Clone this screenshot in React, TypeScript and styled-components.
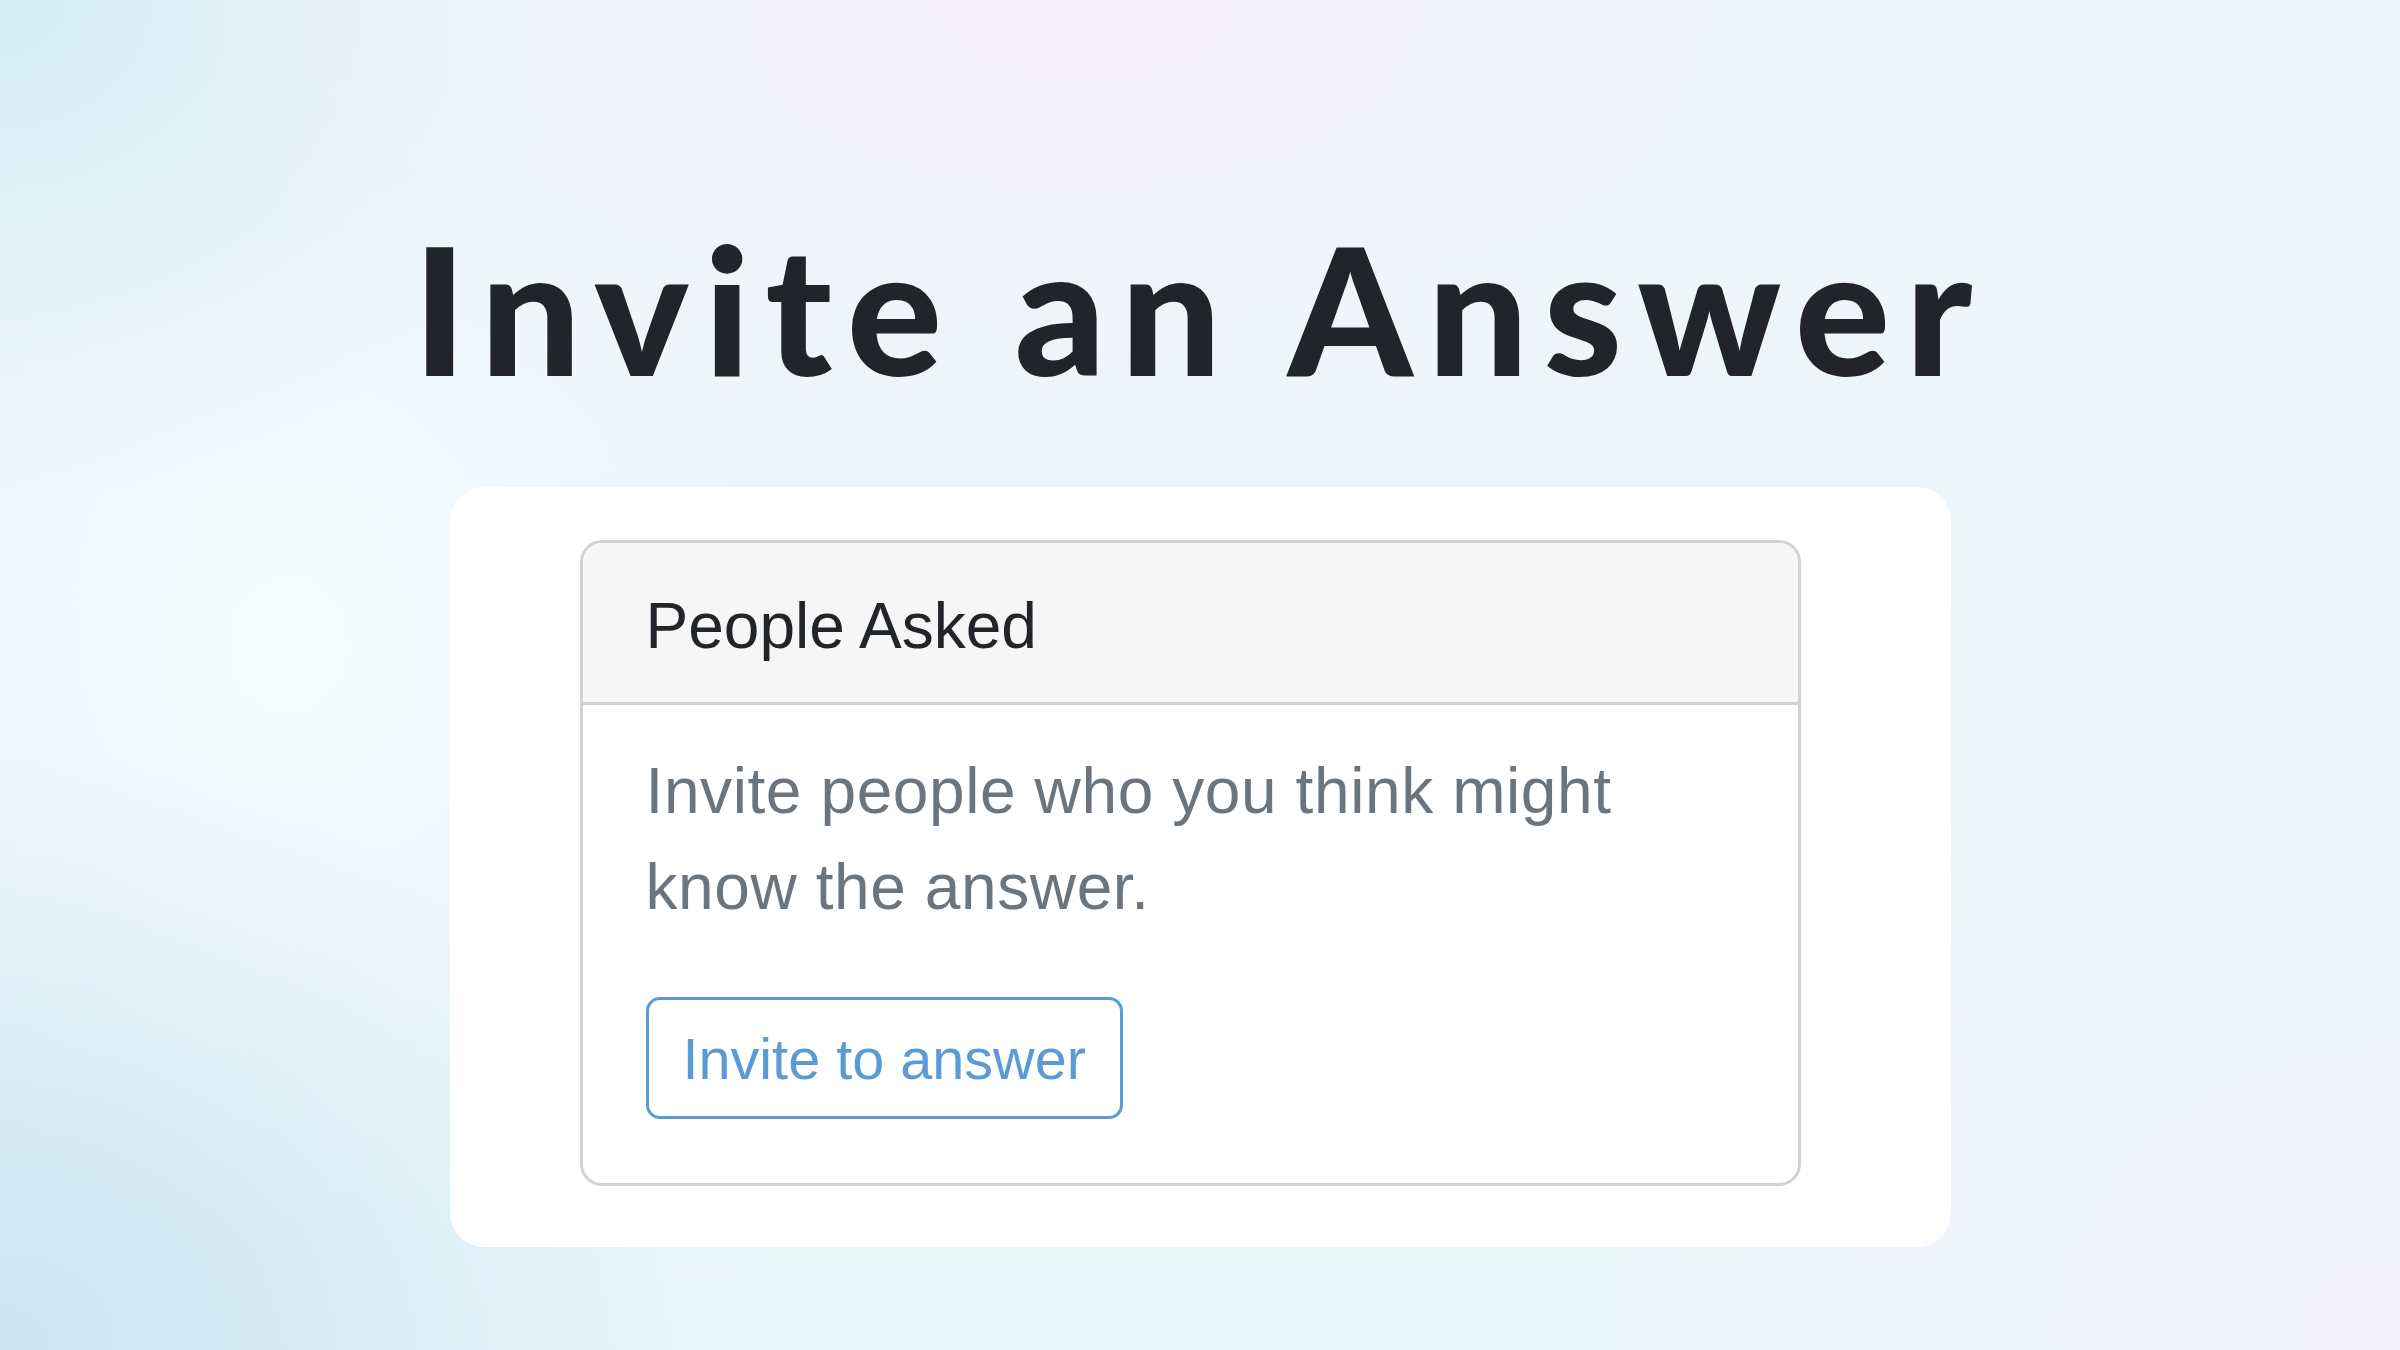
import React from "react";
import styled, { createGlobalStyle } from "styled-components";

const GlobalStyle = createGlobalStyle`
  html, body { margin: 0; padding: 0; }
  body {
    font-family: "Liberation Sans", Arial, sans-serif;
    background: #eef6fb;
  }
  * { box-sizing: border-box; }
`;

const Page = styled.div`
  width: 100%;
  min-height: 100vh;
  display: flex;
  flex-direction: column;
  align-items: center;
  padding-top: 218px;
  background:
    radial-gradient(ellipse 900px 500px at 45% 0%, rgba(245, 240, 253, 1) 0%, rgba(245, 240, 253, 0) 100%),
    radial-gradient(ellipse 800px 700px at 100% 100%, rgba(244, 242, 253, 1) 0%, rgba(244, 242, 253, 0) 100%),
    radial-gradient(ellipse 700px 600px at 0% 100%, rgba(205, 229, 242, 1) 0%, rgba(205, 229, 242, 0) 100%),
    radial-gradient(ellipse 600px 500px at 0% 0%, rgba(214, 236, 245, 1) 0%, rgba(214, 236, 245, 0) 100%),
    radial-gradient(ellipse 500px 600px at 12% 48%, rgba(244, 252, 253, 1) 0%, rgba(244, 252, 253, 0) 100%),
    radial-gradient(ellipse 900px 700px at 50% 75%, rgba(234, 250, 253, 1) 0%, rgba(234, 250, 253, 0) 100%),
    linear-gradient(180deg, #eef6fb 0%, #e8f4fa 100%);
`;

const Title = styled.h1`
  margin: 0;
  font-family: Lato, "Liberation Sans", sans-serif;
  font-weight: 900;
  font-size: 178px;
  line-height: 1;
  letter-spacing: 15px;
  color: #212529;
  white-space: nowrap;
`;

const Panel = styled.div`
  margin-top: 91px;
  width: 1501px;
  background: #ffffff;
  border-radius: 34px;
  padding: 53px 150px 61px 130px;
`;

const Card = styled.div`
  border: 3px solid #d2d2d2;
  border-radius: 22px;
  overflow: hidden;
  background: #ffffff;
`;

const CardHeader = styled.div`
  background: #f6f6f6;
  border-bottom: 3px solid #d2d2d2;
  padding: 45px 66px 37px 63px;
`;

const CardTitle = styled.h5`
  margin: 0;
  font-family: "Liberation Sans", Arial, sans-serif;
  font-weight: 400;
  font-size: 64px;
  line-height: 1.2;
  color: #212529;
`;

const CardBody = styled.div`
  padding: 38px 66px 64px 63px;
`;

const BodyText = styled.p`
  margin: 0 0 62px;
  font-family: "Liberation Sans", Arial, sans-serif;
  font-size: 64px;
  line-height: 1.5;
  letter-spacing: 0.6px;
  color: #6c757d;
`;

const OutlineButton = styled.button`
  display: inline-block;
  font-family: "Liberation Sans", Arial, sans-serif;
  font-size: 57.6px;
  line-height: 1.5;
  color: #5a9bd6;
  background: #ffffff;
  border: 3px solid #5a9bd6;
  border-radius: 14px;
  padding: 16px 34px 14px;
  cursor: pointer;
`;

export default function App() {
  return (
    <>
      <GlobalStyle />
      <Page>
        <Title>Invite an Answer</Title>
        <Panel>
          <Card>
            <CardHeader>
              <CardTitle>People Asked</CardTitle>
            </CardHeader>
            <CardBody>
              <BodyText>Invite people who you think might know the answer.</BodyText>
              <OutlineButton>Invite to answer</OutlineButton>
            </CardBody>
          </Card>
        </Panel>
      </Page>
    </>
  );
}
